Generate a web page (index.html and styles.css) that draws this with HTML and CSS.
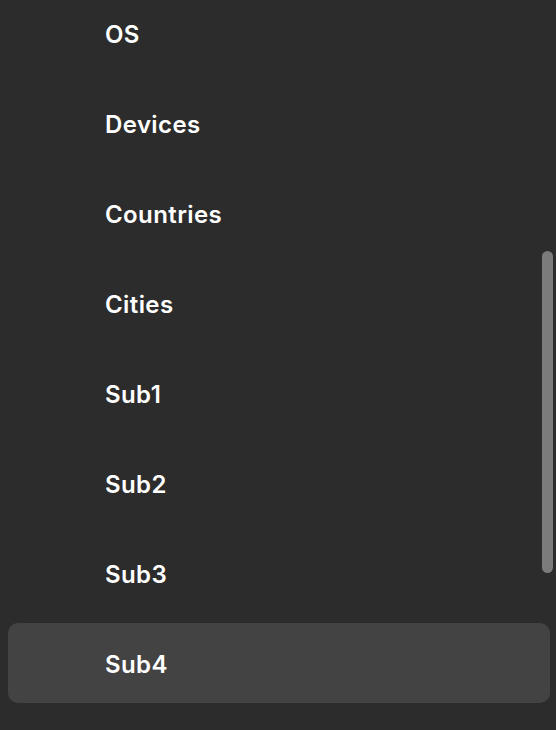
FILE: index.html
```html
<!DOCTYPE html>
<html>
<head>
<meta charset="utf-8">
<link rel="stylesheet" href="styles.css">
</head>
<body>
<div class="viewport">
  <ul class="menu">
    <li class="item">OS</li>
    <li class="item">Devices</li>
    <li class="item">Countries</li>
    <li class="item">Cities</li>
    <li class="item">Sub1</li>
    <li class="item">Sub2</li>
    <li class="item">Sub3</li>
    <li class="item active">Sub4</li>
  </ul>
  <div class="scrollbar"></div>
</div>
</body>
</html>
```
FILE: styles.css
```css
html, body {
  margin: 0;
  padding: 0;
  background: #2c2c2c;
  width: 556px;
  height: 730px;
  overflow: hidden;
}
.viewport {
  position: relative;
  height: 730px;
  overflow: hidden;
}
.menu {
  list-style: none;
  margin: -7px 0 0 0;
  padding: 0 6px 0 8px;
  display: flex;
  flex-direction: column;
  gap: 10px;
}
.item {
  height: 80px;
  display: flex;
  align-items: center;
  padding-left: 97px;
  padding-top: 2px;
  box-sizing: border-box;
  border-radius: 10px;
  font-family: Inter, "Noto Sans", sans-serif;
  font-weight: 560;
  font-size: 24px;
  color: #ffffff;
  letter-spacing: 0.4px;
}
.item.active {
  background: #434343;
}
.scrollbar {
  position: absolute;
  left: 542px;
  top: 251px;
  width: 11px;
  height: 322px;
  border-radius: 6px;
  background: #7b7b7b;
}
```
